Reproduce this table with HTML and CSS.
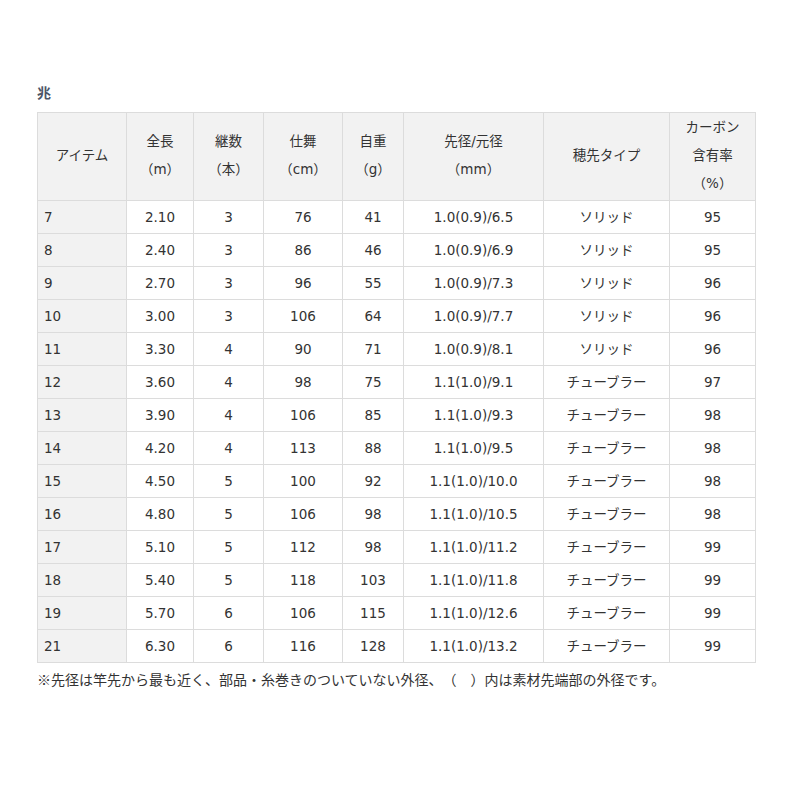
FILE: index.html
```html
<!DOCTYPE html>
<html lang="ja">
<head>
<meta charset="utf-8">
<link rel="stylesheet" href="styles.css">
</head>
<body>
<div class="wrap">
  <h2 class="title">兆</h2>
  <table class="spec">
    <colgroup>
      <col class="c1"><col class="c2"><col class="c3"><col class="c4"><col class="c5"><col class="c6"><col class="c7"><col class="c8">
    </colgroup>
    <thead>
      <tr>
        <th>アイテム</th>
        <th>全長<br>（m）</th>
        <th>継数<br>（本）</th>
        <th>仕舞<br>（cm）</th>
        <th>自重<br>（g）</th>
        <th>先径/元径<br>（mm）</th>
        <th>穂先タイプ</th>
        <th>カーボン<br>含有率<br>（%）</th>
      </tr>
    </thead>
    <tbody>
      <tr><td>7</td><td>2.10</td><td>3</td><td>76</td><td>41</td><td>1.0(0.9)/6.5</td><td>ソリッド</td><td>95</td></tr>
      <tr><td>8</td><td>2.40</td><td>3</td><td>86</td><td>46</td><td>1.0(0.9)/6.9</td><td>ソリッド</td><td>95</td></tr>
      <tr><td>9</td><td>2.70</td><td>3</td><td>96</td><td>55</td><td>1.0(0.9)/7.3</td><td>ソリッド</td><td>96</td></tr>
      <tr><td>10</td><td>3.00</td><td>3</td><td>106</td><td>64</td><td>1.0(0.9)/7.7</td><td>ソリッド</td><td>96</td></tr>
      <tr><td>11</td><td>3.30</td><td>4</td><td>90</td><td>71</td><td>1.0(0.9)/8.1</td><td>ソリッド</td><td>96</td></tr>
      <tr><td>12</td><td>3.60</td><td>4</td><td>98</td><td>75</td><td>1.1(1.0)/9.1</td><td>チューブラー</td><td>97</td></tr>
      <tr><td>13</td><td>3.90</td><td>4</td><td>106</td><td>85</td><td>1.1(1.0)/9.3</td><td>チューブラー</td><td>98</td></tr>
      <tr><td>14</td><td>4.20</td><td>4</td><td>113</td><td>88</td><td>1.1(1.0)/9.5</td><td>チューブラー</td><td>98</td></tr>
      <tr><td>15</td><td>4.50</td><td>5</td><td>100</td><td>92</td><td>1.1(1.0)/10.0</td><td>チューブラー</td><td>98</td></tr>
      <tr><td>16</td><td>4.80</td><td>5</td><td>106</td><td>98</td><td>1.1(1.0)/10.5</td><td>チューブラー</td><td>98</td></tr>
      <tr><td>17</td><td>5.10</td><td>5</td><td>112</td><td>98</td><td>1.1(1.0)/11.2</td><td>チューブラー</td><td>99</td></tr>
      <tr><td>18</td><td>5.40</td><td>5</td><td>118</td><td>103</td><td>1.1(1.0)/11.8</td><td>チューブラー</td><td>99</td></tr>
      <tr><td>19</td><td>5.70</td><td>6</td><td>106</td><td>115</td><td>1.1(1.0)/12.6</td><td>チューブラー</td><td>99</td></tr>
      <tr><td>21</td><td>6.30</td><td>6</td><td>116</td><td>128</td><td>1.1(1.0)/13.2</td><td>チューブラー</td><td>99</td></tr>
    </tbody>
  </table>
  <p class="note">※先径は竿先から最も近く、部品・糸巻きのついていない外径、（　）内は素材先端部の外径です。</p>
</div>
</body>
</html>
```

FILE: styles.css
```css
html, body {
  margin: 0;
  padding: 0;
  background: #fff;
}
body {
  font-family: "DejaVu Sans", "Noto Sans CJK JP", sans-serif;
  color: #333;
  font-size: 14px;
  text-spacing-trim: space-all;
}
.wrap {
  padding: 82px 0 0 37px;
  width: 718px;
}
.title {
  margin: 0 0 10px 0;
  font-family: "Noto Sans CJK JP", sans-serif;
  font-size: 14px;
  font-weight: bold;
  color: #4d5566;
  line-height: 20px;
}
.spec {
  border-collapse: collapse;
  table-layout: fixed;
  width: 718px;
  font-size: 13.5px;
}
.c1 { width: 89px; }
.c2 { width: 67px; }
.c3 { width: 70px; }
.c4 { width: 79px; }
.c5 { width: 61px; }
.c6 { width: 140px; }
.c7 { width: 126px; }
.c8 { width: 86px; }
.spec th, .spec td {
  border: 1px solid #dcdcdc;
  text-align: center;
  font-weight: normal;
  padding: 0 4px;
}
.spec th {
  background: #f2f2f2;
  height: 84px;
  padding-bottom: 3px;
  line-height: 28px;
}
.spec td {
  height: 32px;
  line-height: 20px;
}
.spec td:first-child {
  background: #f2f2f2;
  text-align: left;
  padding-left: 6px;
}
.note {
  margin: 4px 0 0 0;
  line-height: 24px;
  font-size: 14px;
  font-family: "Noto Sans CJK JP", sans-serif;
}
```
